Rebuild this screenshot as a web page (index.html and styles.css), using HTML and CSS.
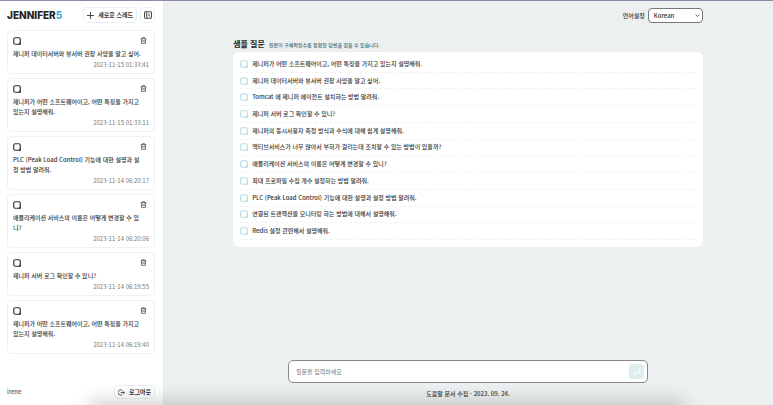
FILE: index.html
```
<!DOCTYPE html>
<html lang="ko">
<head>
    <meta charset="UTF-8">
    <meta name="viewport" content="width=device-width, initial-scale=1.0">
    <title>JENNIFER5</title>
    <link rel="stylesheet" href="styles.css">
</head>
<body>
    <svg class="defs" aria-hidden="true">
        <symbol id="chat" viewBox="0 0 16 16">
            <path d="M14.500 14.500H4.500a3 3 0 0 1-3-3v-7a3 3 0 0 1 3-3h7a3 3 0 0 1 3 3z" fill="none" stroke="currentColor" stroke-width="2.400"/>
            <path d="M10 15l5-5v5z" fill="currentColor"/>
        </symbol>
        <symbol id="trash" viewBox="0 0 16 16">
            <path d="M1.500 4h13M5.500 4V1.500h5V4M3.500 4v10.500h9V4M6.500 7v4.500M9.500 7v4.500" fill="none" stroke="currentColor" stroke-width="1.500"/>
        </symbol>
    </svg>

    <aside class="sidebar">
        <header class="sidebar-top">
            <h1 class="logo">JENNIFER<span>5</span></h1>
            <button type="button" class="btn new-thread">
                <svg viewBox="0 0 16 16"><path d="M8 0v16M0 8h16" fill="none" stroke="currentColor" stroke-width="2"/></svg>
                새로운 스레드
            </button>
            <button type="button" class="btn fold" aria-label="사이드바 접기">
                <svg viewBox="0 0 16 16"><path d="M2 1.500h12a1 1 0 0 1 1 1v11a1 1 0 0 1-1 1H2a1 1 0 0 1-1-1v-11a1 1 0 0 1 1-1zM5.500 1.500v13M12 5L9 8l3 3" fill="none" stroke="currentColor" stroke-width="1.800"/></svg>
            </button>
        </header>

        <ul class="threads">
            <li class="thread">
                <div class="thread-head">
                    <svg class="chat-icon"><use href="#chat"/></svg>
                    <button type="button" class="delete" aria-label="삭제"><svg><use href="#trash"/></svg></button>
                </div>
                <p>제니퍼 데이터서버와 뷰서버 권장 사양을 알고 싶어.</p>
                <time>2023-11-15 01:33:41</time>
            </li>
            <li class="thread">
                <div class="thread-head">
                    <svg class="chat-icon"><use href="#chat"/></svg>
                    <button type="button" class="delete" aria-label="삭제"><svg><use href="#trash"/></svg></button>
                </div>
                <p>제니퍼가 어떤 소프트웨어이고, 어떤 특징을 가지고 있는지 설명해줘.</p>
                <time>2023-11-15 01:33:11</time>
            </li>
            <li class="thread">
                <div class="thread-head">
                    <svg class="chat-icon"><use href="#chat"/></svg>
                    <button type="button" class="delete" aria-label="삭제"><svg><use href="#trash"/></svg></button>
                </div>
                <p>PLC (Peak Load Control) 기능에 대한 설명과 설정 방법 알려줘.</p>
                <time>2023-11-14 06:20:17</time>
            </li>
            <li class="thread">
                <div class="thread-head">
                    <svg class="chat-icon"><use href="#chat"/></svg>
                    <button type="button" class="delete" aria-label="삭제"><svg><use href="#trash"/></svg></button>
                </div>
                <p>애플리케이션 서비스의 이름은 어떻게 변경할 수 있니?</p>
                <time>2023-11-14 06:20:06</time>
            </li>
            <li class="thread">
                <div class="thread-head">
                    <svg class="chat-icon"><use href="#chat"/></svg>
                    <button type="button" class="delete" aria-label="삭제"><svg><use href="#trash"/></svg></button>
                </div>
                <p>제니퍼 서버 로그 확인할 수 있니?</p>
                <time>2023-11-14 06:19:55</time>
            </li>
            <li class="thread">
                <div class="thread-head">
                    <svg class="chat-icon"><use href="#chat"/></svg>
                    <button type="button" class="delete" aria-label="삭제"><svg><use href="#trash"/></svg></button>
                </div>
                <p>제니퍼가 어떤 소프트웨어이고, 어떤 특징을 가지고 있는지 설명해줘.</p>
                <time>2023-11-14 06:19:40</time>
            </li>
        </ul>

        <footer class="user">
            <span>irene</span>
            <button type="button" class="btn logout">
                <svg viewBox="0 0 16 16"><path d="M10 3.500A6 6 0 1 0 10 12.500M6 8h9M12 5l3 3-3 3" fill="none" stroke="currentColor" stroke-width="1.800"/></svg>
                로그아웃
            </button>
        </footer>
    </aside>

    <main class="main">
        <div class="language">
            <label for="language">언어설정</label>
            <div class="select">
                <select id="language">
                    <option>Korean</option>
                    <option>English</option>
                </select>
                <svg viewBox="0 0 10 6"><path d="M1 1l4 4 4-4" fill="none" stroke="currentColor" stroke-width="1.500"/></svg>
            </div>
        </div>

        <section class="samples">
            <div class="samples-title">
                <h2>샘플 질문</h2>
                <p>질문이 구체적일수록 정확한 답변을 얻을 수 있습니다.</p>
            </div>
            <ul class="sample-list">
                <li><button type="button"><svg class="chat-icon"><use href="#chat"/></svg>제니퍼가 어떤 소프트웨어이고, 어떤 특징을 가지고 있는지 설명해줘.</button></li>
                <li><button type="button"><svg class="chat-icon"><use href="#chat"/></svg>제니퍼 데이터서버와 뷰서버 권장 사양을 알고 싶어.</button></li>
                <li><button type="button"><svg class="chat-icon"><use href="#chat"/></svg>Tomcat 에 제니퍼 에이전트 설치하는 방법 알려줘.</button></li>
                <li><button type="button"><svg class="chat-icon"><use href="#chat"/></svg>제니퍼 서버 로그 확인할 수 있니?</button></li>
                <li><button type="button"><svg class="chat-icon"><use href="#chat"/></svg>제니퍼의 동시사용자 측정 방식과 수식에 대해 쉽게 설명해줘.</button></li>
                <li><button type="button"><svg class="chat-icon"><use href="#chat"/></svg>액티브서비스가 너무 많아서 부하가 걸리는데 조치할 수 있는 방법이 있을까?</button></li>
                <li><button type="button"><svg class="chat-icon"><use href="#chat"/></svg>애플리케이션 서비스의 이름은 어떻게 변경할 수 있니?</button></li>
                <li><button type="button"><svg class="chat-icon"><use href="#chat"/></svg>최대 프로파일 수집 개수 설정하는 방법 알려줘.</button></li>
                <li><button type="button"><svg class="chat-icon"><use href="#chat"/></svg>PLC (Peak Load Control) 기능에 대한 설명과 설정 방법 알려줘.</button></li>
                <li><button type="button"><svg class="chat-icon"><use href="#chat"/></svg>연결된 트랜잭션을 모니터링 하는 방법에 대해서 설명해줘.</button></li>
                <li><button type="button"><svg class="chat-icon"><use href="#chat"/></svg>Redis 설정 관련해서 설명해줘.</button></li>
            </ul>
        </section>

        <form class="composer">
            <input type="text" aria-label="질문" placeholder="질문을 입력하세요">
            <button type="submit" aria-label="보내기">
                <svg viewBox="0 0 16 16"><path d="M14 1v11H3M7 8l-4 4h4" fill="none" stroke="currentColor" stroke-width="2.400"/></svg>
            </button>
        </form>
        <p class="updated">도움말 문서 수집 - 2023. 09. 24.</p>
    </main>
</body>
</html>
```
FILE: styles.css
```
* {
    box-sizing: border-box;
}

body {
    margin: 0;
    min-height: 100vh;
    display: flex;
    overflow: hidden;
    border-top: 1px solid #8f86b3;
    background: #ecf0f1;
    color: #333;
    font-family: "Noto Sans CJK KR", sans-serif;
    font-size: 6px;
    line-height: 10px;
}

/* soft shade along the bottom edge of the window */
body::after {
    content: "";
    position: fixed;
    left: 12%;
    right: 12%;
    bottom: -12px;
    height: 10px;
    box-shadow: 0 0 20px 4px rgba(0, 0, 0, 0.24);
    pointer-events: none;
}

h1, h2, p, ul {
    margin: 0;
    padding: 0;
}

ul {
    list-style: none;
}

button, input, select {
    font: inherit;
    color: inherit;
}

button {
    padding: 0;
    border: none;
    background: none;
    cursor: pointer;
}

svg {
    display: block;
    width: 7px;
    height: 7px;
    flex: none;
}

.chat-icon {
    width: 8px;
    height: 8px;
}

.defs {
    display: none;
}

/* sidebar */
.sidebar {
    width: 21%;
    min-width: 163px;
    padding: 6px 8px 6px 7px;
    display: flex;
    flex-direction: column;
    background: #fff;
}

.sidebar-top {
    display: flex;
    align-items: center;
    gap: 3px;
    margin-bottom: 7px;
}

.logo {
    margin-right: auto;
    font-family: Inter, sans-serif;
    font-size: 10px;
    font-weight: 800;
    line-height: 16px;
    color: #222;
}

.logo span {
    color: #3cb4d0;
}

.btn {
    display: flex;
    align-items: center;
    justify-content: center;
    gap: 4px;
    height: 16px;
    border: 1px solid #e8f1f2;
    border-radius: 4px;
    font-weight: 700;
    white-space: nowrap;
}

.new-thread {
    padding: 0 3px;
}

.fold {
    width: 15px;
}

.fold svg {
    width: 8px;
    height: 8px;
}

.threads {
    display: flex;
    flex-direction: column;
    gap: 4px;
}

.thread {
    padding: 5px 5px 3px;
    border: 1px solid #edf3f4;
    border-radius: 4px;
}

.thread-head {
    display: flex;
    justify-content: space-between;
    align-items: center;
    height: 9px;
    margin-bottom: 4px;
}

.thread-head .delete {
    margin-right: 2px;
}

.thread p {
    padding-right: 7px;
    font-weight: 500;
    word-break: break-all;
}

.thread time {
    display: block;
    margin-top: 1px;
    text-align: right;
    color: #777;
}

.user {
    display: flex;
    align-items: center;
    justify-content: space-between;
    margin-top: auto;
}

.logout {
    height: 14px;
    padding: 0 3px;
}

/* main */
.main {
    flex: 1;
    display: flex;
    flex-direction: column;
    align-items: center;
    padding: 7px 0 6px;
}

.language {
    width: 77%;
    display: flex;
    align-items: center;
    justify-content: flex-end;
    gap: 3px;
    font-weight: 500;
}

.select {
    position: relative;
}

.select select {
    display: block;
    width: 55px;
    height: 15px;
    padding: 0 5px;
    border: 1px solid #777;
    border-radius: 4px;
    background: #fff;
    appearance: none;
}

.select svg {
    position: absolute;
    top: 6px;
    right: 3px;
    width: 5px;
    height: 3px;
}

.samples {
    width: 77%;
    margin-top: 15px;
}

.samples-title {
    display: flex;
    align-items: baseline;
    gap: 4px;
    margin-bottom: 2px;
}

.samples-title h2 {
    font-size: 8px;
    line-height: 12px;
    color: #222;
}

.samples-title p {
    font-size: 5px;
    font-weight: 500;
    color: #46707a;
}

.sample-list {
    display: grid;
    grid-auto-rows: 1fr;
    min-height: 195px;
    padding: 4px 7px 7px;
    border-radius: 6px;
    background: #fff;
}

.sample-list li {
    display: flex;
    border-bottom: 1px dashed #f0f4f5;
}

.sample-list button {
    flex: 1;
    display: flex;
    align-items: center;
    gap: 4px;
    font-weight: 500;
    text-align: left;
}

.sample-list svg {
    color: #b5dde3;
}

.composer {
    width: 59%;
    margin-top: auto;
    display: flex;
    align-items: center;
    padding: 3px;
    border: 1px solid #888;
    border-radius: 5px;
    background: #fff;
}

.composer input {
    flex: 1;
    min-width: 0;
    padding: 0 4px;
    border: none;
    outline: none;
    background: none;
}

.composer input::placeholder {
    color: #777;
}

.composer button {
    display: flex;
    align-items: center;
    justify-content: center;
    width: 15px;
    height: 15px;
    border-radius: 3px;
    background: #e0edef;
    color: #fff;
}

.updated {
    margin-top: 6px;
    font-weight: 500;
}
```
